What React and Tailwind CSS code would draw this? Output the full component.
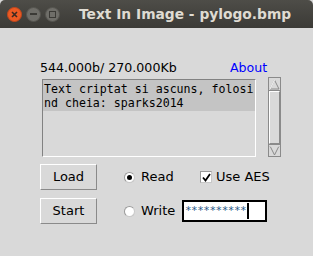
import { useState } from 'react';

function TitleBar() {
  return (
    <div className="h-[28px] flex items-center bg-gradient-to-b from-[#4e4d48] to-[#3b3a36] rounded-t-[5px]">
      <div className="flex items-center gap-[4px] pl-[7px]">
        <div className="w-[15px] h-[15px] rounded-full bg-[#ec5a23] border border-[#c2461c] flex items-center justify-center">
          <svg width="7" height="7" viewBox="0 0 7 7">
            <path d="M1 1L6 6M6 1L1 6" stroke="#3b2a22" strokeWidth="1.6" />
          </svg>
        </div>
        <div className="w-[15px] h-[15px] rounded-full bg-[#6f6e69] border border-[#55544f] flex items-center justify-center">
          <div className="w-[7px] h-[2px] bg-[#3b3a36]" />
        </div>
        <div className="w-[15px] h-[15px] rounded-full bg-[#6f6e69] border border-[#55544f] flex items-center justify-center">
          <div className="w-[7px] h-[7px] border-[1.5px] border-[#3b3a36]" />
        </div>
      </div>
      <span className="ml-[19px] text-[13.8px] font-bold text-[#dfdbd2] whitespace-nowrap font-['DejaVu_Sans',sans-serif]">
        Text In Image - pylogo.bmp
      </span>
    </div>
  );
}

function Scrollbar() {
  return (
    <div className="w-[13px] h-[80px] flex flex-col border border-[#8a8a8a] bg-[#d9d9d9]">
      <div className="h-[13px] border-b border-[#8a8a8a] flex items-center justify-center">
        <svg width="11" height="11" viewBox="0 0 11 11">
          <path d="M5.5 1L10 10H1Z" fill="#d9d9d9" stroke="#8a8a8a" />
          <path d="M5.5 1L1 10" stroke="#fff" />
        </svg>
      </div>
      <div className="flex-1 border-t border-l border-white border-b border-r border-b-[#8a8a8a] border-r-[#8a8a8a]" />
      <div className="h-[12px] border-t border-[#8a8a8a] flex items-center justify-center">
        <svg width="11" height="11" viewBox="0 0 11 11">
          <path d="M1 1H10L5.5 10Z" fill="#d9d9d9" stroke="#8a8a8a" />
          <path d="M1 1H10" stroke="#fff" />
        </svg>
      </div>
    </div>
  );
}

function TkButton({ children }) {
  return (
    <button className="shrink-0 w-[57px] h-[26px] bg-[#d9d9d9] border border-white border-b-[#8a8a8a] border-r-[#8a8a8a] text-[13px] text-black">
      {children}
    </button>
  );
}

function Radio({ checked, label, onClick }) {
  return (
    <div className="flex items-center gap-[6px]" onClick={onClick}>
      <div className="shrink-0 w-[11px] h-[11px] rounded-full bg-white border border-[#c8c8c8] border-t-[#9a9a9a] border-l-[#9a9a9a] flex items-center justify-center">
        {checked && <div className="w-[5px] h-[5px] rounded-full bg-black" />}
      </div>
      <span className="text-[13px] text-black whitespace-nowrap">{label}</span>
    </div>
  );
}

export default function App() {
  const [mode, setMode] = useState('read');

  return (
    <div className="w-[313px] h-[256px] bg-[#d9d9d9] flex flex-col font-['DejaVu_Sans',sans-serif]">
      <TitleBar />

      <div className="flex items-center h-[14px] mt-[33px] pl-[40px]">
        <span className="text-[12.6px] text-black w-[190px] whitespace-nowrap">544.000b/ 270.000Kb</span>
        <span className="text-[12.6px] text-[#0000ff]">About</span>
      </div>

      <div className="flex mt-[2px]">
        <div className="ml-[42px] mt-[2px] w-[214px] h-[78px] overflow-hidden border border-[#828282] border-b-white border-r-white bg-[#d9d9d9] font-['DejaVu_Sans_Mono',monospace] text-[11.6px] leading-[14px] text-black whitespace-pre">
          <div className="bg-[#c4c4c4] pl-[1px] pt-[2px] pb-[1px]">
            <div>Text criptat si ascuns, folosi</div>
            <div>nd cheia: sparks2014</div>
          </div>
        </div>
        <div className="ml-[12px]">
          <Scrollbar />
        </div>
      </div>

      <div className="flex items-center mt-[7px] pl-[40px]">
        <TkButton>Load</TkButton>
        <div className="ml-[27px] w-[76px] shrink-0">
          <Radio checked={mode === 'read'} label="Read" onClick={() => setMode('read')} />
        </div>
        <div className="flex items-center gap-[4px]">
          <div className="shrink-0 w-[12px] h-[12px] bg-white border border-[#9a9a9a] border-b-[#c8c8c8] border-r-[#c8c8c8] flex items-center justify-center">
            <svg width="9" height="9" viewBox="0 0 9 9">
              <path d="M1 4.5L3.5 7.5L8 1" fill="none" stroke="#000" strokeWidth="1.8" />
            </svg>
          </div>
          <span className="text-[13px] text-black whitespace-nowrap">Use AES</span>
        </div>
      </div>

      <div className="flex items-center mt-[8px] pl-[40px]">
        <TkButton>Start</TkButton>
        <div className="ml-[27px] w-[58px] shrink-0">
          <Radio checked={mode === 'write'} label="Write" onClick={() => setMode('write')} />
        </div>
        <div className="shrink-0 w-[85px] h-[22px] bg-white border-2 border-black flex items-center pl-[1px]">
          <span className="text-[11px] text-[#2a5a8a] tracking-[-0.5px] font-['DejaVu_Sans_Mono',monospace]">**********</span>
          <div className="w-[2px] h-[16px] bg-black ml-[1px]" />
        </div>
      </div>
    </div>
  );
}
